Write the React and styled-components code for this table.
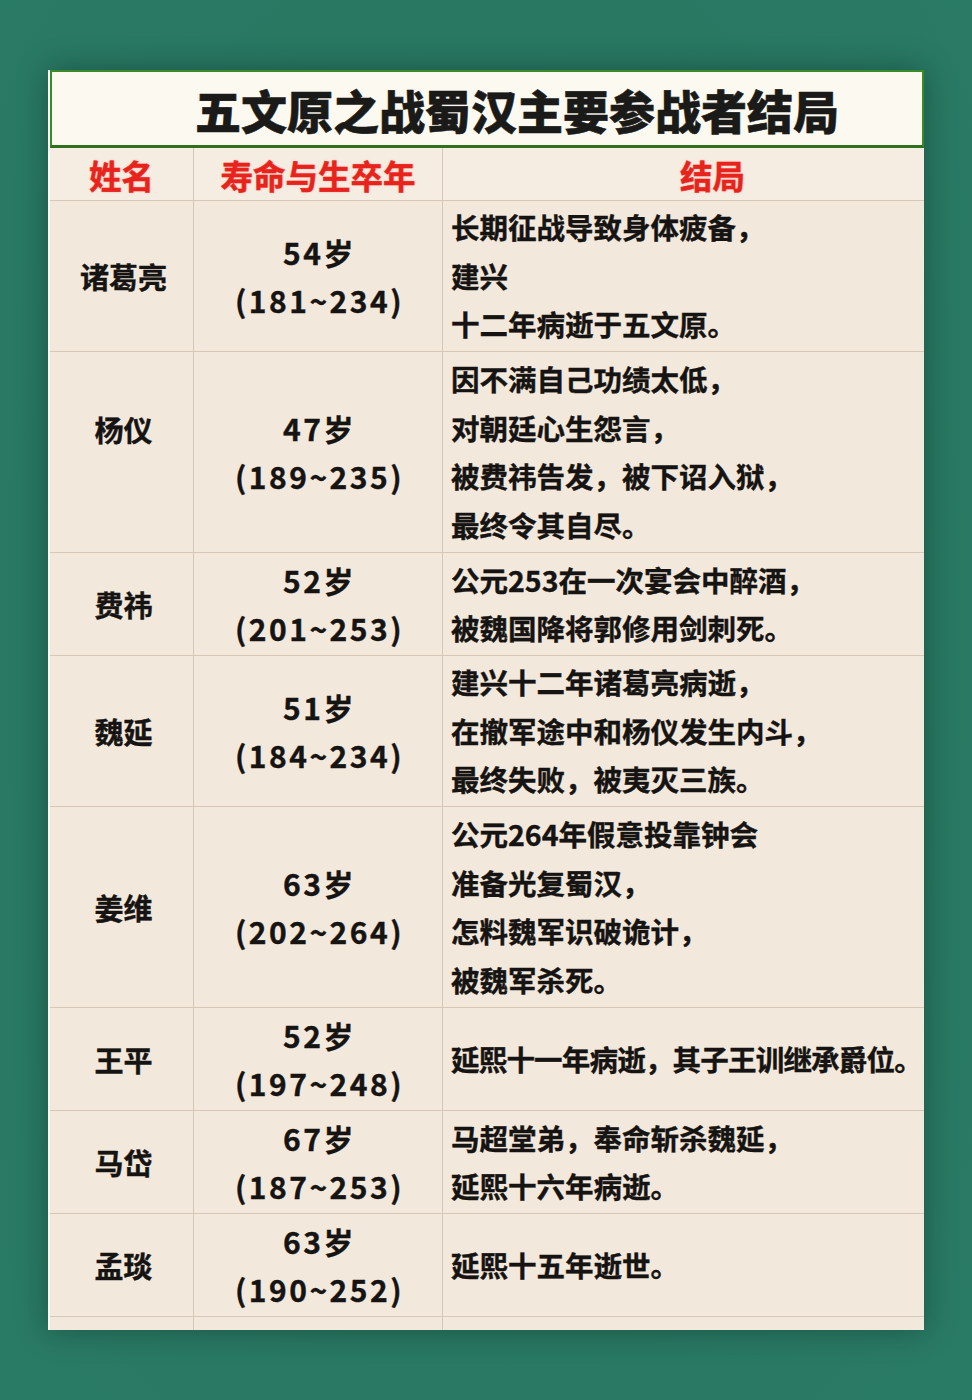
import React from "react"
import styled, { createGlobalStyle } from "styled-components"

const rows = [
  { name: "诸葛亮", age: "54岁", years: "(181~234)", fate: ["长期征战导致身体疲备，", "建兴", "十二年病逝于五文原。"] },
  { name: "杨仪", age: "47岁", years: "(189~235)", fate: ["因不满自己功绩太低，", "对朝廷心生怨言，", "被费祎告发，被下诏入狱，", "最终令其自尽。"], raise: true },
  { name: "费祎", age: "52岁", years: "(201~253)", fate: ["公元253在一次宴会中醉酒，", "被魏国降将郭修用剑刺死。"] },
  { name: "魏延", age: "51岁", years: "(184~234)", fate: ["建兴十二年诸葛亮病逝，", "在撤军途中和杨仪发生内斗，", "最终失败，被夷灭三族。"] },
  { name: "姜维", age: "63岁", years: "(202~264)", fate: ["公元264年假意投靠钟会", "准备光复蜀汉，", "怎料魏军识破诡计，", "被魏军杀死。"] },
  { name: "王平", age: "52岁", years: "(197~248)", fate: ["延熙十一年病逝，其子王训继承爵位。"], tight: true },
  { name: "马岱", age: "67岁", years: "(187~253)", fate: ["马超堂弟，奉命斩杀魏延，", "延熙十六年病逝。"] },
  { name: "孟琰", age: "63岁", years: "(190~252)", fate: ["延熙十五年逝世。"] },
]

const App = () => {
  return (
    <Page>
      <GlobalStyle />
      <Card>
        <Title>
          <h1>五文原之战蜀汉主要参战者结局</h1>
        </Title>
        <Row $head>
          <HeadCell>姓名</HeadCell>
          <HeadCell>寿命与生卒年</HeadCell>
          <HeadCell $shift>结局</HeadCell>
        </Row>
        {rows.map((r) => (
          <Row key={r.name} $lines={r.fate.length}>
            <NameCell $raise={r.raise}>{r.name}</NameCell>
            <AgeCell>
              <span>{r.age}</span>
              <span>{r.years}</span>
            </AgeCell>
            <FateCell $tight={r.tight}>
              {r.fate.map((line, i) => (
                <span key={i}>{line}</span>
              ))}
            </FateCell>
          </Row>
        ))}
        <Row $stub>
          <Cell />
          <Cell />
          <Cell />
        </Row>
      </Card>
    </Page>
  )
}

// Styling Only

const rowHeights = { 1: 103, 2: 103, 3: 151, 4: 201 }

const GlobalStyle = createGlobalStyle`
  body {
    margin: 0;
    background: #287861;
    font-family: "Noto Sans CJK SC", "Noto Sans", sans-serif;
  }
`

const Page = styled.div`
  min-height: 1400px;
  padding-top: 70px;
  box-sizing: border-box;
  background: radial-gradient(ellipse at 50% 45%, #2a7a63 0%, #287862 60%, #2a7b66 100%);
`

const Card = styled.div`
  margin: 0 48px;
  background: #f3e8dc;
  border-left: 2px solid #fbf7f0;
  box-shadow: 0 0 28px rgba(10, 40, 30, 0.45);
  overflow: hidden;
  height: 1260px;
  color: #161412;
`

const Title = styled.div`
  height: 78px;
  box-sizing: border-box;
  background: #fcf9f1;
  border: 2px solid #3b8a2a;
  border-bottom: 3px solid #2f6f1e;
  display: flex;
  align-items: center;
  justify-content: center;
  padding-left: 60px;
  h1 {
    margin: 0;
    font-size: 46px;
    font-weight: 900;
    color: #1a1a18;
    -webkit-text-stroke: 0.6px #1a1a18;
  }
`

const Row = styled.div`
  display: grid;
  grid-template-columns: 144px 249px 1fr;
  border-bottom: ${(p) => (p.$stub ? "none" : "1px solid #d6c8b7")};
  background: ${(p) => (p.$head ? "#f5ece2" : "transparent")};
  height: ${(p) => (p.$head ? "53px" : p.$stub ? "20px" : "auto")};
  min-height: ${(p) => (p.$lines ? rowHeights[p.$lines] + "px" : "0")};
  box-sizing: border-box;
`

const Cell = styled.div`
  border-right: 1px solid #d6c8b7;
  display: flex;
  flex-direction: column;
  justify-content: center;
  &:last-child {
    border-right: none;
  }
`

const HeadCell = styled(Cell)`
  align-items: center;
  padding-left: ${(p) => (p.$shift ? "58px" : "0")};
  font-size: 32.5px;
  font-weight: 700;
  color: #e8231c;
  -webkit-text-stroke: 0.4px #e8231c;
  text-shadow: 0 0 2px rgba(240, 60, 40, 0.45);
`

const NameCell = styled(Cell)`
  align-items: center;
  font-size: 29px;
  font-weight: 700;
  -webkit-text-stroke: 0.4px #161412;
  padding-left: 4px;
  padding-bottom: ${(p) => (p.$raise ? "46px" : "0")};
`

const AgeCell = styled(Cell)`
  align-items: center;
  font-size: 30px;
  font-weight: 700;
  -webkit-text-stroke: 0.4px #161412;
  line-height: 48.5px;
  letter-spacing: 2.5px;
  padding-left: 3px;
`

const FateCell = styled(Cell)`
  align-items: flex-start;
  padding-left: 8px;
  font-size: 28.5px;
  font-weight: 700;
  -webkit-text-stroke: 0.4px #161412;
  line-height: 48.5px;
  white-space: nowrap;
  letter-spacing: ${(p) => (p.$tight ? "-0.8px" : "0")};
`

export default App
